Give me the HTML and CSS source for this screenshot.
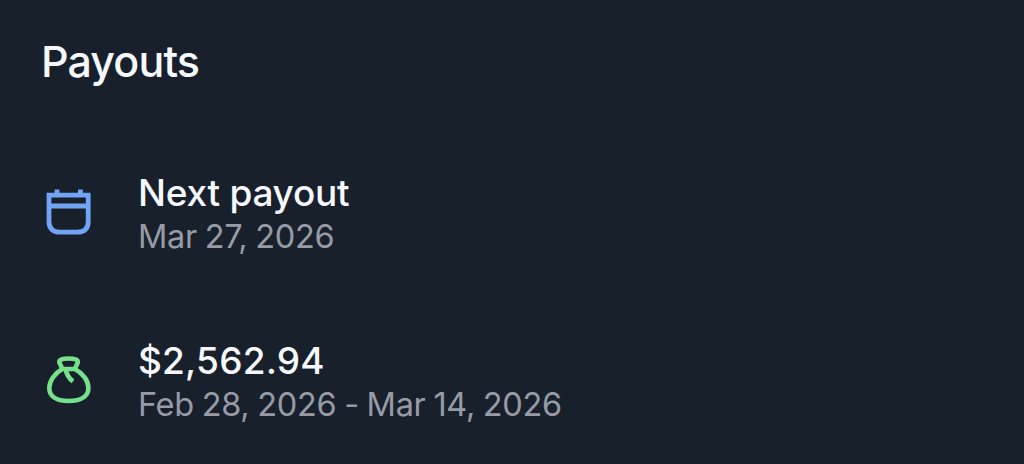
FILE: index.html
```
<!DOCTYPE html>
<html lang="en">
<head>
    <meta charset="UTF-8">
    <meta name="viewport" content="width=device-width, initial-scale=1.0">
    <title>Payouts</title>
    <link rel="stylesheet" href="styles.css">
</head>
<body>
    <section class="payouts">
        <h1 class="payouts-title">Payouts</h1>

        <div class="payout-row">
            <!-- calendar -->
            <svg class="payout-icon calendar" viewBox="0 0 48 48" fill="none" stroke="currentColor" stroke-width="4.8">
                <path d="M4 7.2H43.2V33.5Q43.2 44.2 32 44.2H15.2Q4 44.2 4 33.5ZM4 18H43.2M12 1.4V8M35.4 1.4V8"/>
            </svg>
            <div class="payout-text">
                <p class="payout-main">Next payout</p>
                <p class="payout-sub">Mar 27, 2026</p>
            </div>
        </div>

        <div class="payout-row">
            <!-- money bag -->
            <svg class="payout-icon bag" viewBox="0 0 48 48" fill="none" stroke="currentColor" stroke-width="4.6" stroke-linejoin="round">
                <path d="M17.4 13L14.4 6.6C13.8 3.4 17.8 2.5 23.6 2.5S33.4 3.4 32.8 6.6L29.8 13ZM17.4 13C9.5 17.2 4.3 25 4.3 32C4.3 41.5 13.4 45 23.6 45S43.4 41.5 43.4 32C43.4 25 38 17.2 29.8 13M20.6 13C21.6 18.5 24 22.5 28 25.4"/>
            </svg>
            <div class="payout-text">
                <p class="payout-main amount">$2,562.94</p>
                <p class="payout-sub">Feb 28, 2026 - Mar 14, 2026</p>
            </div>
        </div>
    </section>
</body>
</html>
```
FILE: styles.css
```
* {
    box-sizing: border-box;
}

body {
    margin: 0;
    background-color: #18202b;
    color: #f5f8fc;
    font-family: Inter, "Liberation Sans", Arial, sans-serif;
}

.payouts {
    height: 464px;
    padding: 36px 41px 0;
}

.payouts-title {
    margin: 0 0 85px;
    font-size: 43px;
    font-weight: 500;
    line-height: 50px;
    letter-spacing: -0.9px;
}

.payout-row {
    display: flex;
    align-items: flex-start;
    gap: 45px;
    height: 88px;
    margin-bottom: 80px;
}

.payout-icon {
    flex: none;
    width: 48px;
    height: 48px;
    margin: 17px 0 0 4px;
}

.calendar {
    color: #71a4f5;
}

.bag {
    color: #76e08a;
}

.payout-main,
.payout-sub {
    margin: 0;
    white-space: nowrap;
}

.payout-main {
    font-size: 37px;
    font-weight: 500;
    line-height: 44px;
    letter-spacing: -0.25px;
}

.amount {
    letter-spacing: 0.2px;
}

.payout-sub {
    color: #969ba6;
    font-size: 32.5px;
    font-weight: 400;
    line-height: 44px;
    letter-spacing: -0.3px;
    word-spacing: -1px;
}
```
